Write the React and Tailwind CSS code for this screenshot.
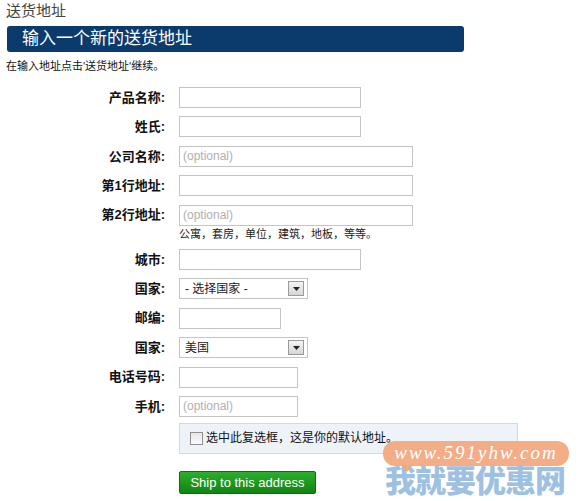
const fields = [
  { label: "产品名称:", w: "w-[182px]" },
  { label: "姓氏:", w: "w-[182px]" },
  { label: "公司名称:", w: "w-[234px]", ph: "(optional)" },
  { label: "第1行地址:", w: "w-[234px]" },
  { label: "第2行地址:", w: "w-[234px]", ph: "(optional)", hint: "公寓，套房，单位，建筑，地板，等等。" },
  { label: "城市:", w: "w-[182px]" },
  { label: "国家:", select: "- 选择国家 -" },
  { label: "邮编:", w: "w-[102px]" },
  { label: "国家:", select: "美国" },
  { label: "电话号码:", w: "w-[119px]" },
  { label: "手机:", w: "w-[119px]", ph: "(optional)" },
];

const Select = ({ value }) => (
  <div className="w-[129px] h-[21px] border border-[#c4c4c4] bg-white flex items-center justify-between pl-[5px] pr-[3px]">
    <span className="text-[12px] text-[#222]">{value}</span>
    <span className="w-[16px] h-[15px] border border-[#9a9a9a] bg-gradient-to-b from-[#f4f4f4] to-[#d6d6d6] flex items-center justify-center">
      <svg width="7" height="4" viewBox="0 0 7 4"><path d="M0 0h7L3.5 4z" fill="#222" /></svg>
    </span>
  </div>
);

const Row = ({ f }) => (
  <div className="flex">
    <div className="w-[165px] h-[21px] flex items-center justify-end text-[13px] font-bold text-[#111]">{f.label}</div>
    <div className="ml-[14px]">
      {f.select ? (
        <Select value={f.select} />
      ) : (
        <div className={`${f.w} h-[21px] border border-[#c4c4c4] bg-white flex items-center pl-[3px] text-[12px] text-[#b0b0b0]`}>
          {f.ph}
        </div>
      )}
      {f.hint && <div className="text-[11px] text-[#222] mt-[1px] leading-[14px]">{f.hint}</div>}
    </div>
  </div>
);

export default function App() {
  return (
    <div className="relative w-[583px] h-[501px] bg-white overflow-hidden" style={{ fontFamily: '"Liberation Sans", "Noto Sans CJK SC", sans-serif' }}>
      <div className="px-[6px] pt-[1px] text-[15px] leading-[20px] text-[#444]">送货地址</div>
      <div className="mx-[7px] mt-[5px] w-[457px] h-[26px] rounded-[3px] bg-[#0b3b6c] flex items-center pl-[15px] text-[17px] text-white">
        输入一个新的送货地址
      </div>
      <div className="px-[6px] mt-[7px] text-[11px] leading-[14px] text-[#111]">在输入地址点击'送货地址'继续。</div>
      <div className="mt-[14px] flex flex-col gap-[8.4px]">
        {fields.map((f, i) => (
          <Row key={i} f={f} />
        ))}
      </div>
      <div className="ml-[179px] mt-[6px] w-[339px] h-[31px] border border-[#cfdbe9] bg-[#eef3fa] flex items-center pl-[10px] gap-[3px]">
        <span className="w-[13px] h-[13px] border border-[#8f8f8f] bg-gradient-to-b from-[#e6e6e6] to-[#fafafa]" />
        <span className="text-[12px] text-[#111]">选中此复选框，这是你的默认地址。</span>
      </div>
      <button className="ml-[179px] mt-[17px] w-[137px] h-[23px] rounded-[2px] bg-gradient-to-b from-[#2cae2c] to-[#118411] border border-[#0e6e0e] text-white text-[13px] flex items-center justify-center">
        Ship to this address
      </button>
      <div className="absolute left-[383px] top-[441px] pointer-events-none">
        <div className="relative w-[186px] h-[25px] rounded-[12px] bg-[#f2a57a]/90 flex items-center justify-center">
          <span className="text-[19px] italic text-white tracking-[2px]" style={{ fontFamily: '"Liberation Serif", serif' }}>www.591yhw.com</span>
          <span className="absolute left-[18px] top-[24px] w-0 h-0 border-l-[6px] border-r-[6px] border-t-[7px] border-l-transparent border-r-transparent border-t-[#f2a57a]/90" />
        </div>
        <div className="mt-[-4px] ml-[2px] text-[31px] leading-[34px] font-black text-[#8db6dc]/85 tracking-[-1px]" style={{ fontFamily: '"Noto Sans CJK SC", sans-serif' }}>
          我就要优惠网
        </div>
      </div>
    </div>
  );
}
